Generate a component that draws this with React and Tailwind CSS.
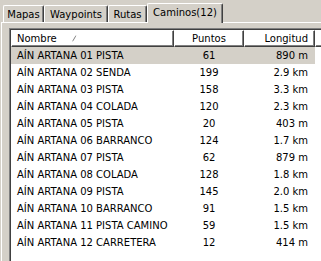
import React from "react";

const rows = [
  ["AÍN ARTANA 01 PISTA", "61", "890 m"],
  ["AÍN ARTANA 02 SENDA", "199", "2.9 km"],
  ["AÍN ARTANA 03 PISTA", "158", "3.3 km"],
  ["AÍN ARTANA 04 COLADA", "120", "2.3 km"],
  ["AÍN ARTANA 05 PISTA", "20", "403 m"],
  ["AÍN ARTANA 06 BARRANCO", "124", "1.7 km"],
  ["AÍN ARTANA 07 PISTA", "62", "879 m"],
  ["AÍN ARTANA 08 COLADA", "128", "1.8 km"],
  ["AÍN ARTANA 09 PISTA", "145", "2.0 km"],
  ["AÍN ARTANA 10 BARRANCO", "91", "1.5 km"],
  ["AÍN ARTANA 11 PISTA CAMINO", "59", "1.5 km"],
  ["AÍN ARTANA 12 CARRETERA", "12", "414 m"],
];

function Tab({ label, w }) {
  return (
    <div
      className={`${w} h-[17px] shrink-0 box-border border-l border-t border-white border-r border-r-[#404040] rounded-tl-[2px] rounded-tr-[2px] shadow-[inset_-1px_0_0_#808080] flex justify-center pt-[2px] leading-[13px]`}
    >
      {label}
    </div>
  );
}

const headCell =
  "h-[17px] shrink-0 box-border border-l border-t border-white border-r border-b border-r-[#404040] border-b-[#404040] shadow-[inset_-1px_-1px_0_#808080] flex items-center leading-[13px]";

export default function App() {
  return (
    <div className="w-[321px] h-[261px] overflow-hidden bg-[#d4d0c8] text-black text-[10px] font-['DejaVu_Sans',Verdana,sans-serif]">
      <div className="flex items-end h-[22px] pl-[3px]">
        <Tab label="Mapas" w="w-[41px]" />
        <Tab label="Waypoints" w="w-[64px]" />
        <Tab label="Rutas" w="w-[39px]" />
        <div className="relative z-10 w-[76px] h-[20px] -mb-px shrink-0 box-border bg-[#d4d0c8] border-l border-t border-white border-r border-r-[#404040] rounded-tl-[2px] rounded-tr-[2px] shadow-[inset_-1px_0_0_#808080] flex justify-center pt-[2px] leading-[13px]">
          Caminos(12)
        </div>
      </div>
      <div className="ml-px border-l border-t border-white h-[300px]">
        <div className="ml-[7px] mt-[5px] w-[340px] h-[300px] border-l border-t border-[#808080] bg-white">
          <div className="border-l border-t border-[#404040] h-full">
            <div className="flex">
              <div className={`${headCell} w-[163px] pl-[5px]`}>
                <span>Nombre</span>
                <svg width="8" height="7" viewBox="0 0 8 7" className="ml-[15px]">
                  <line x1="0.5" y1="6.5" x2="4" y2="0.5" stroke="#808080" strokeWidth="1" />
                  <line x1="4" y1="0.5" x2="7.5" y2="6.5" stroke="#ffffff" strokeWidth="1.2" />
                  <line x1="0.5" y1="6.5" x2="7.5" y2="6.5" stroke="#ffffff" strokeWidth="1.2" />
                </svg>
              </div>
              <div className={`${headCell} w-[70px] justify-center`}>Puntos</div>
              <div className={`${headCell} w-[71px] justify-end pr-[6px]`}>Longitud</div>
              <div className={`${headCell} flex-1`}></div>
            </div>
            {rows.map((r, i) => (
              <div
                key={i}
                className={`flex w-[304px] h-[17px] items-center leading-[13px] ${i === 0 ? "bg-[#d4d0c8]" : ""}`}
              >
                <div className="w-[163px] pl-[6px] whitespace-nowrap">{r[0]}</div>
                <div className="w-[70px] text-center">{r[1]}</div>
                <div className="w-[71px] text-right pr-[7px]">{r[2]}</div>
              </div>
            ))}
          </div>
        </div>
      </div>
    </div>
  );
}
